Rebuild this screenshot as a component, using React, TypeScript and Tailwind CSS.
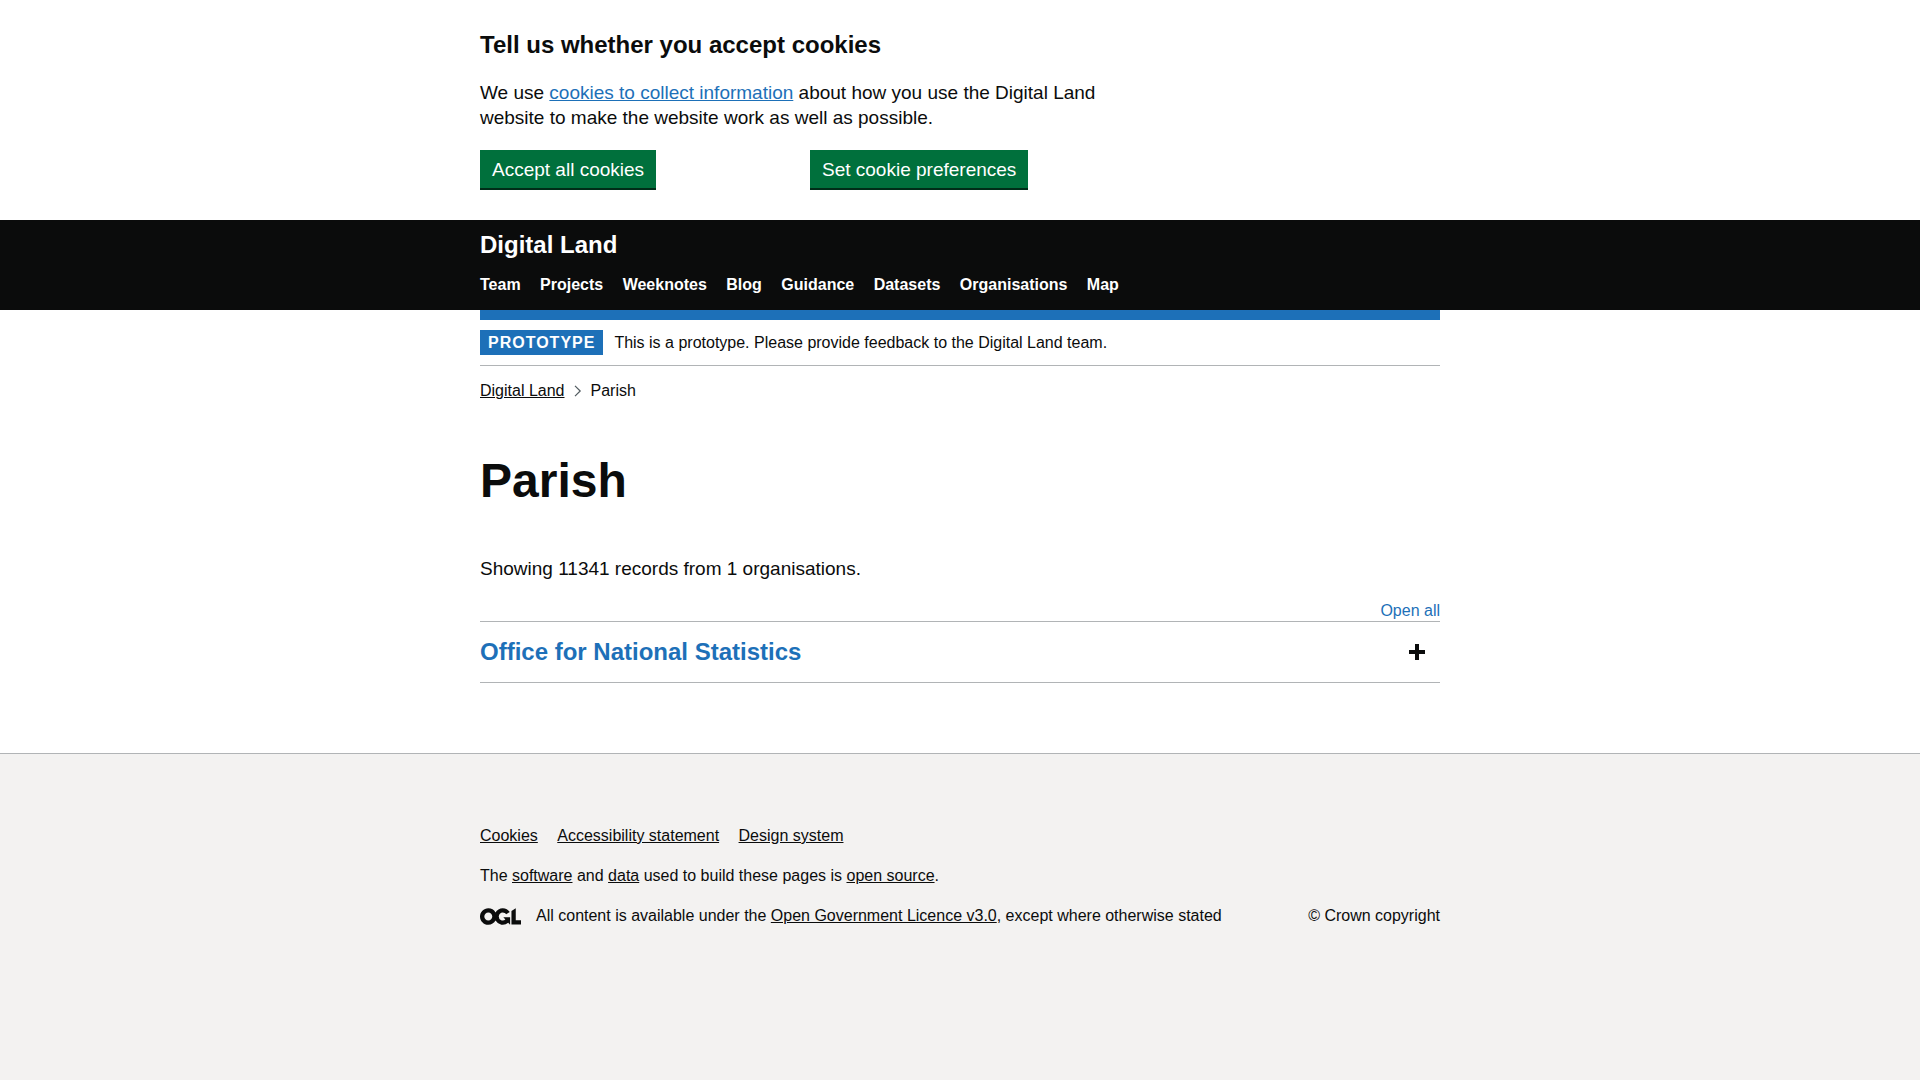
import React, { useState } from "react";

const navItems = [
  "Team",
  "Projects",
  "Weeknotes",
  "Blog",
  "Guidance",
  "Datasets",
  "Organisations",
  "Map",
];

const footerLinks = ["Cookies", "Accessibility statement", "Design system"];

function Container({ children }: { children: React.ReactNode }) {
  return <div className="mx-auto w-full max-w-[1020px] px-[30px]">{children}</div>;
}

function Link({ children, className = "" }: { children: React.ReactNode; className?: string }) {
  return (
    <a href="#" className={`underline ${className}`}>
      {children}
    </a>
  );
}

function GreenButton({ children }: { children: React.ReactNode }) {
  return (
    <button
      type="button"
      className="bg-[#00703c] px-3 pt-[10px] pb-[9px] text-[19px] leading-[19px] text-white shadow-[0_2px_0_#002d18]"
    >
      {children}
    </button>
  );
}

function CookieBanner() {
  return (
    <section aria-label="Cookie banner" className="pt-[30px] pb-8">
      <Container>
        <h2 className="mb-5 text-2xl leading-[30px] font-bold">Tell us whether you accept cookies</h2>
        <p className="mb-5 max-w-[630px] text-[19px] leading-[25px]">
          We use <Link className="text-[#1d70b8]">cookies to collect information</Link> about how you use the
          Digital Land website to make the website work as well as possible.
        </p>
        <div className="grid max-w-[660px] grid-cols-2">
          <div>
            <GreenButton>Accept all cookies</GreenButton>
          </div>
          <div>
            <GreenButton>Set cookie preferences</GreenButton>
          </div>
        </div>
      </Container>
    </section>
  );
}

function Header() {
  return (
    <header className="bg-[#0b0c0c] text-white">
      <Container>
        <div className="pt-[10px] text-2xl leading-[30px] font-bold">
          <a href="#">Digital Land</a>
        </div>
        <nav aria-label="Main" className="py-[15px]">
          <ul className="leading-5 font-bold">
            {navItems.map((item) => (
              <React.Fragment key={item}>
                <li className="mr-[15px] inline-block">
                  <a href="#">{item}</a>
                </li>{" "}
              </React.Fragment>
            ))}
          </ul>
        </nav>
      </Container>
    </header>
  );
}

function OglLogo() {
  return (
    <svg
      aria-hidden="true"
      viewBox="0 0 483.2 195.7"
      width="41"
      height="17"
      fill="currentColor"
      className="mr-[15px] shrink-0"
    >
      <path d="M421.5 142.8V.1l-50.7 32.3v161.1h112.4v-50.7zm-122.3-9.6A47.12 47.12 0 0 1 221 97.8c0-26 21.1-47.1 47.1-47.1 16.7 0 31.4 8.7 39.7 21.8l42.7-27.2A97.63 97.63 0 0 0 268.1 0c-36.5 0-68.3 20.1-85.1 49.7A98 98 0 0 0 97.8 0C43.9 0 0 43.9 0 97.8s43.9 97.8 97.8 97.8c36.5 0 68.3-20.1 85.1-49.7a97.76 97.76 0 0 0 149.6 25.4l19.4 22.2h3v-87.8h-80l24.3 27.5zM97.8 145c-26 0-47.1-21.1-47.1-47.1s21.1-47.1 47.1-47.1 47.1 21.1 47.1 47.1S123.8 145 97.8 145" />
    </svg>
  );
}

export default function App() {
  const [open, setOpen] = useState(false);
  return (
    <div className="flex min-h-screen flex-col bg-white font-['Liberation_Sans',Arial,sans-serif] text-base text-[#0b0c0c]">
      <CookieBanner />
      <Header />
      <Container>
        <div className="h-[10px] bg-[#1d70b8]" />
        <div className="flex items-center border-b border-[#b1b4b6] py-[10px]">
          <strong className="mr-[11px] bg-[#1d70b8] px-2 leading-[25px] tracking-[1px] text-white uppercase">
            Prototype
          </strong>
          <span className="leading-5">This is a prototype. Please provide feedback to the Digital Land team.</span>
        </div>
        <nav aria-label="Breadcrumb" className="pt-[15px]">
          <ol className="flex items-center leading-5">
            <li>
              <Link>Digital Land</Link>
            </li>
            <li className="flex items-center">
              <svg
                aria-hidden="true"
                width="8"
                height="12"
                viewBox="0 0 8 12"
                fill="none"
                stroke="#505a5f"
                strokeWidth="1.2"
                className="mx-[9px]"
              >
                <path d="M1 .8 6.2 6 1 11.2" />
              </svg>
              Parish
            </li>
          </ol>
        </nav>
        <main className="pt-[55px] pb-[70px]">
          <h1 className="mb-[50px] text-5xl leading-[50px] font-bold">Parish</h1>
          <p className="mb-5 text-[19px] leading-[25px]">Showing 11341 records from 1 organisations.</p>
          <div className="text-right leading-5">
            <button type="button" className="text-[#1d70b8]" onClick={() => setOpen(!open)}>
              {open ? "Close all" : "Open all"}
            </button>
          </div>
          <div className="border-y border-[#b1b4b6]">
            <h2>
              <button
                type="button"
                aria-expanded={open}
                onClick={() => setOpen(!open)}
                className="flex w-full items-center justify-between py-[15px] pr-[15px] text-left text-2xl leading-[30px] font-bold text-[#1d70b8]"
              >
                Office for National Statistics
                <svg aria-hidden="true" width="16" height="16" viewBox="0 0 16 16" fill="#0b0c0c">
                  <path d="M0 6h16v4H0z" />
                  {!open && <path d="M6 0h4v16H6z" />}
                </svg>
              </button>
            </h2>
          </div>
        </main>
      </Container>
      <footer className="grow border-t border-[#b1b4b6] bg-[#f3f2f1] pt-[72px] pb-[25px]">
        <Container>
          <ul className="mb-5 leading-5">
            {footerLinks.map((item) => (
              <React.Fragment key={item}>
                <li className="mr-[15px] inline-block">
                  <Link>{item}</Link>
                </li>{" "}
              </React.Fragment>
            ))}
          </ul>
          <p className="mb-5 leading-5">
            The <Link>software</Link> and <Link>data</Link> used to build these pages is{" "}
            <Link>open source</Link>.
          </p>
          <div className="flex items-center leading-5">
            <OglLogo />
            <span className="grow">
              All content is available under the <Link>Open Government Licence v3.0</Link>, except where
              otherwise stated
            </span>
            <a href="#">© Crown copyright</a>
          </div>
        </Container>
      </footer>
    </div>
  );
}
